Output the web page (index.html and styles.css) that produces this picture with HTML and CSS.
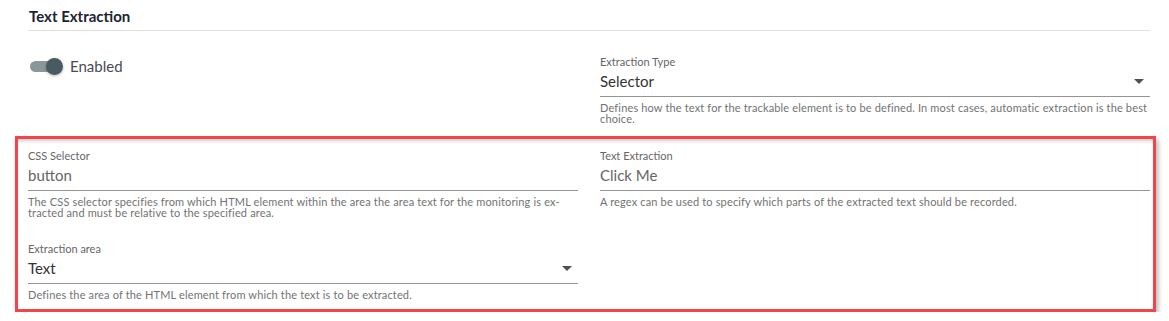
FILE: index.html
```html
<!DOCTYPE html>
<html lang="en">
<head>
<meta charset="utf-8">
<title>Text Extraction</title>
<link rel="stylesheet" href="styles.css">
</head>
<body>
<div class="page">
  <h2 class="title">Text Extraction</h2>
  <div class="grid top-row">
    <div class="cell">
      <div class="switch-row">
        <span class="switch"><span class="track"></span><span class="knob"></span></span>
        <span class="switch-label">Enabled</span>
      </div>
    </div>
    <div class="field">
      <div class="label">Extraction Type</div>
      <div class="control select">
        <span class="value dark">Selector</span>
        <svg class="caret" width="10" height="5" viewBox="0 0 10 5"><path d="M0 0h10L5 5z" fill="#4a5257"/></svg>
      </div>
      <div class="help">Defines how the text for the trackable element is to be defined. In most cases, automatic extraction is the best<br>choice.</div>
    </div>
  </div>
  <div class="highlight">
    <div class="grid inner">
      <div class="field">
        <div class="label">CSS Selector</div>
        <div class="control"><span class="value">button</span></div>
        <div class="help">The CSS selector specifies from which HTML element within the area the area text for the monitoring is ex-<br>tracted and must be relative to the specified area.</div>
      </div>
      <div class="field">
        <div class="label">Text Extraction</div>
        <div class="control"><span class="value">Click Me</span></div>
        <div class="help">A regex can be used to specify which parts of the extracted text should be recorded.</div>
      </div>
      <div class="field">
        <div class="label">Extraction area</div>
        <div class="control select">
          <span class="value dark">Text</span>
          <svg class="caret" width="10" height="5" viewBox="0 0 10 5"><path d="M0 0h10L5 5z" fill="#4a5257"/></svg>
        </div>
        <div class="help">Defines the area of the HTML element from which the text is to be extracted.</div>
      </div>
      <div class="cell"></div>
    </div>
  </div>
</div>
</body>
</html>
```

FILE: styles.css
```css
* { box-sizing: border-box; }
html, body { margin: 0; padding: 0; background: #fff; }
body {
  font-family: "Lato", "Noto Sans", sans-serif;
  color: #333;
}
.page {
  padding: 6px 19px 0 28px;
}
.title {
  margin: 0;
  font-size: 15px;
  font-weight: 700;
  line-height: 20px;
  color: #1c2431;
  padding: 0 0 4px 1px;
  border-bottom: 1px solid #e0e0e0;
}
.grid {
  display: grid;
  grid-template-columns: 550px 550px;
  column-gap: 22px;
  align-items: start;
}
.top-row {
  margin-top: 24px;
}
.switch-row {
  display: flex;
  align-items: center;
  height: 22px;
}
.switch {
  position: relative;
  display: block;
  width: 35px;
  height: 18px;
  margin-left: 2px;
}
.track {
  position: absolute;
  left: 0;
  top: 4px;
  width: 30px;
  height: 11px;
  border-radius: 6px;
  background: #8c979c;
}
.knob {
  position: absolute;
  left: 16px;
  top: 1px;
  width: 17px;
  height: 17px;
  border-radius: 50%;
  background: #485a62;
  box-shadow: 0 1px 3px rgba(0,0,0,.3);
}
.switch-label {
  margin-left: 5px;
  font-size: 15px;
  color: #4a4a52;
}
.label {
  font-size: 11px;
  line-height: 14px;
  color: #666;
}
.control {
  display: flex;
  align-items: center;
  justify-content: space-between;
  margin-top: 2px;
  padding-bottom: 5px;
  border-bottom: 1px solid #949494;
}
.value {
  font-size: 15px;
  line-height: 20px;
  color: #666;
}
.value.dark { color: #333; }
.caret { margin-right: 6px; }
.help {
  margin-top: 5px;
  font-size: 11px;
  letter-spacing: 0.15px;
  line-height: 11px;
  color: #727272;
}
.highlight {
  margin: 12px -6px 0 -13px;
  border: 3px solid #f2444b;
  padding: 10px 3px 9px 10px;
  box-shadow: 2px 3px 5px rgba(0,0,0,.3), inset 0 4px 4px -3px rgba(0,0,0,.3);
}
.inner {
  row-gap: 24px;
}
```
